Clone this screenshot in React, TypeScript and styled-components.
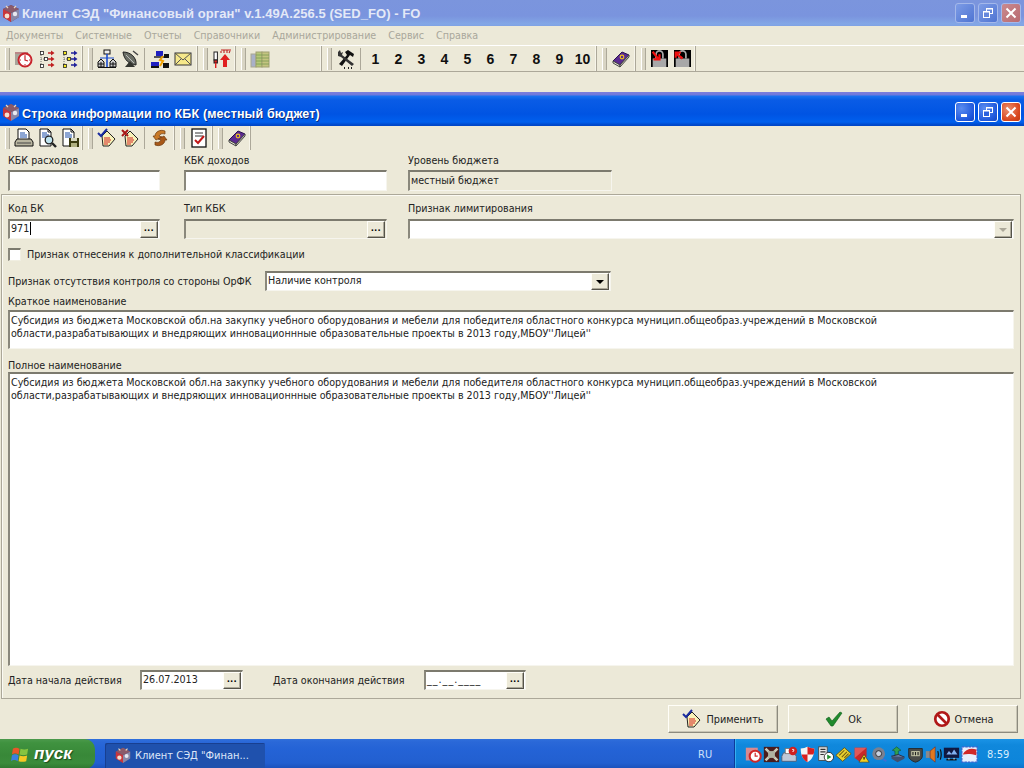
import React from "react";
import styled, { createGlobalStyle } from "styled-components";

const Global = createGlobalStyle`
  html, body { margin: 0; padding: 0; background: #ece9d8; overflow: hidden; }
  * { box-sizing: border-box; }
  body { font-family: "DejaVu Sans", "Liberation Sans", Arial, sans-serif; font-stretch: condensed; font-size: 10.65px; color: #111; }
`;

const Page = styled.div`
  width: 1024px; height: 768px; display: flex; flex-direction: column; background: #ece9d8; overflow: hidden;
`;
const TitleBar = styled.div<{ $active?: boolean }>`
  display: flex; align-items: center; flex: none; color: #fff; white-space: nowrap;
  height: ${p => (p.$active ? 34 : 26)}px;
  padding: ${p => (p.$active ? "6px 3px 0 1px" : "0 3px 0 1px")};
  background: ${p => p.$active
    ? "linear-gradient(#7d7fdc 0,#6f78dc 3px,#1b72ee 4px,#0a5ce6 8px,#0054e3 22px,#0060ee 30px,#0047c8 33px)"
    : "linear-gradient(#7b95dd 0,#7a94de 16px,#83a7e6 24px,#7fa2e4 26px)"};
`;
const TitleIcon = styled.span`display: flex; width: 20px; height: 20px; flex: none;`;
const TitleText = styled.span<{ $active?: boolean }>`
  flex: 1; margin-left: 1px; font-family: "Liberation Sans", Arial, sans-serif; font-weight: 700;
  font-size: ${p => (p.$active ? 12.5 : 13)}px;
  letter-spacing: ${p => (p.$active ? 0.15 : 0.06)}px;
  padding-top: ${p => (p.$active ? 3 : 0)}px;
  color: ${p => (p.$active ? "#fff" : "#e4e9f7")};
  text-shadow: ${p => (p.$active ? "1px 1px 0 #0a2d80" : "none")};
`;
const WinButtons = styled.div`display: flex; gap: 3px;`;
const WinBtn = styled.div<{ $close?: boolean; $active?: boolean }>`
  width: 20px; height: 20px; border-radius: 3px; display: flex; align-items: center; justify-content: center;
  border: 1px solid ${p => (p.$active ? "#fff" : "#a4b8ea")};
  background: ${p => p.$close
    ? (p.$active ? "radial-gradient(circle at 35% 35%,#eb9070,#d9481f 65%,#c23a10)" : "linear-gradient(135deg,#c98a8f,#b96a70)")
    : (p.$active ? "radial-gradient(circle at 30% 30%,#5a8cf0,#1f58dc 70%,#1646c0)" : "linear-gradient(135deg,#7d9ce6,#4f74d2)")};
`;
const MenuBar = styled.div`
  height: 19px; flex: none; display: flex; align-items: center; gap: 12px; padding-left: 6px; color: #a9a79b;
`;
const Toolbar = styled.div<{ $framed?: boolean }>`
  display: flex; flex: none; height: ${p => (p.$framed ? 27 : 25)}px;
  border-top: ${p => (p.$framed ? "1px solid #fff" : "0")};
  border-bottom: 1px solid ${p => (p.$framed ? "#aca899" : "#ece9d8")};
`;
const Band = styled.div<{ $width?: number }>`
  display: flex; align-items: center; padding: 0 1px 0 12px; position: relative; flex: none;
  ${p => (p.$width ? `width:${p.$width}px;` : "")}
  border-right: 1px solid #aca899;
  box-shadow: inset -1px 0 0 #f7f5ea;
  &::before {
    content: ""; position: absolute; left: 5px; top: 2px; bottom: 1px; width: 3px;
    background: #d8d4c4; border-left: 1px solid #fff; border-right: 1px solid #aca899;
  }
`;
const Tool = styled.div`
  width: 23px; height: 23px; display: flex; align-items: center; justify-content: center;
  font-family: "Liberation Sans", Arial, sans-serif; font-size: 14px; font-weight: 700; color: #101010; flex: none;
`;
const ToolSep = styled.div`width: 7px; height: 22px; flex: none; display: flex; justify-content: center; &::after { content: ""; width: 1px; background: #aca899; }`;
const Spacer = styled.div<{ $h: number }>`height: ${p => p.$h}px; flex: none;`;

const Panel = styled.div`
  flex: none; height: 43px; padding: 2px 0 0 8px; display: flex; align-items: flex-start;
`;
const Group = styled.div`
  flex: none; height: 505px; margin: 0 3px 0 1px; padding: 6px 0 0 6px;
  border: 1px solid #aca899; box-shadow: inset 1px 1px 0 #fbfaf3;
  display: flex; flex-direction: column;
`;
const Field = styled.div<{ $w: number; $gap?: number }>`
  width: ${p => p.$w}px; margin-right: ${p => p.$gap ?? 0}px; flex: none; display: flex; flex-direction: column;
`;
const Label = styled.label<{ $gap?: number }>`
  height: 14px; line-height: 14px; padding-top: 1px; margin-bottom: ${p => p.$gap ?? 0}px; white-space: nowrap; display: block;
  color: #222;
`;
const Sunken = styled.div<{ $h?: number; $off?: boolean }>`
  height: ${p => p.$h ?? 20}px; display: flex; align-items: center; justify-content: space-between;
  background: ${p => (p.$off ? "#ece9d8" : "#fff")}; color: #222;
  border-style: solid; border-width: 2px 1px 1px 2px;
  border-color: #7c7a6e #f6f5ee #f6f5ee #8a887c;
  padding-left: 1px; white-space: nowrap;
`;
const Caret = styled.span`display: inline-block; width: 1px; height: 13px; background: #000; margin-left: 1px;`;
const InputText = styled.span<{ $mask?: boolean }>`
  display: flex; align-items: center; padding-bottom: 2px;
  ${p => (p.$mask ? "letter-spacing: 1px;" : "")}
`;
const RaisedBtn = styled.div`
  width: 18px; height: 17px; flex: none; margin-right: 1px; display: flex; align-items: center; justify-content: center;
  background: #ece9d8; border: 1px solid; border-color: #fffef8 #55534a #55534a #fffef8;
  box-shadow: inset -1px -1px 0 #aca899;
  font-family: "Liberation Sans", Arial, sans-serif; font-weight: 700; font-size: 10px; line-height: 8px; color: #000;
`;
const Dots = styled.span`letter-spacing: 0.5px; margin-top: -3px;`;
const Arrow = styled.span<{ $dim?: boolean }>`
  width: 0; height: 0; border-style: solid; border-width: 4px 4px 0 4px;
  border-color: ${p => (p.$dim ? "#aca899" : "#000")} transparent transparent transparent;
`;
const Row = styled.div<{ $mt?: number; $h?: number }>`
  display: flex; align-items: flex-start; flex: none; margin-top: ${p => p.$mt ?? 0}px;
  ${p => (p.$h ? `height:${p.$h}px;align-items:center;` : "")}
`;
const Check = styled.span`
  width: 13px; height: 13px; flex: none; background: #fff; margin-right: 6px;
  border-style: solid; border-width: 2px 1px 1px 2px; border-color: #7c7a6e #f1efe2 #f1efe2 #8a887c;
`;
const InlineLabel = styled.span<{ $w?: number; $ml?: number }>`
  white-space: nowrap; color: #222; flex: none;
  ${p => (p.$w ? `width:${p.$w}px;` : "")}
  ${p => (p.$ml ? `margin-left:${p.$ml}px;` : "")}
`;
const TextBox = styled.div<{ $h: number }>`
  width: 1006px; height: ${p => p.$h}px; background: #fff; color: #222; flex: none;
  border-style: solid; border-width: 2px 1px 1px 2px; border-color: #7c7a6e #f6f5ee #f6f5ee #8a887c;
  padding: 2px 0 0 1px; line-height: 13px;
`;
const TextLine = styled.div`white-space: nowrap;`;
const Footer = styled.div`
  height: 40px; flex: none; display: flex; justify-content: flex-end; gap: 10px; padding: 6px 6px 0 0;
`;
const Push = styled.div`
  width: 110px; height: 28px; display: flex; align-items: center; justify-content: center; gap: 4px; color: #222;
  background: #ece9d8; font-size: 10.8px;
  border: 1px solid; border-color: #fffef8 #8c8a7e #8c8a7e #fffef8;
  box-shadow: inset -1px -1px 0 #c9c6b6;
`;
const Taskbar = styled.div`
  height: 30px; flex: none; display: flex; color: #fff;
  background: linear-gradient(#2f6fdc 0,#2a68d8 3px,#2463d6 10px,#225fd0 24px,#1a4fb8 30px);
`;
const Start = styled.div`
  width: 95px; flex: none; display: flex; align-items: center; gap: 4px; padding-left: 11px; border-radius: 0 10px 10px 0;
  background: linear-gradient(#4c9a4c 0,#3f923f 4px,#388838 16px,#3b8c3b 24px,#2e752e 30px);
  font: italic 700 17px "Liberation Sans", Arial, sans-serif; text-shadow: 1px 1px 1px #1c4a1c;
`;
const TaskBtn = styled.div`
  width: 160px; height: 26px; margin: 4px 0 0 10px; display: flex; align-items: center; gap: 3px; padding: 0 0 2px 9px;
  background: #1f51ad; border-radius: 2px; font-size: 11px; color: #dde6f8; white-space: nowrap;
  box-shadow: inset 1px 1px 0 #183f90;
`;
const Lang = styled.div`flex: 1; display: flex; align-items: center; padding-left: 433px; font-size: 11px; color: #cfe0fa;`;
const Tray = styled.div`
  width: 290px; flex: none; display: flex; align-items: center; padding-left: 9px;
  background: linear-gradient(#1a93e6 0,#1088dc 6px,#0d85da 24px,#0b6fc8 30px);
  border-left: 1px solid #0d3a9a; box-shadow: inset 1px 0 0 #38b0f0;
`;
const TrayIcon = styled.span`width: 18px; height: 18px; display: flex; align-items: center; justify-content: center; flex: none;`;
const Clock = styled.span`margin-left: 9px; font-size: 11px; color: #d7ecfb;`;

const Svg: React.FC<React.PropsWithChildren<{ s?: number }>> = ({ s = 20, children }) => (
  <svg width={s} height={s} viewBox="0 0 20 20">{children}</svg>
);

const AppIcon: React.FC<{ s?: number }> = ({ s = 20 }) => (
  <Svg s={s}>
    <path d="M2 6l8-4 8 4v8l-8 5-8-5z" fill="#5d4a78" />
    <path d="M2 6l8 4v9l-8-5z" fill="#c8363c" />
    <path d="M10 10l8-4v8l-8 5z" fill="#8888a8" />
    <path d="M2 6l8-4 8 4-8 4z" fill="#8a5a6a" />
    <circle cx="6" cy="13" r="2.4" fill="#f4e0d0" />
    <circle cx="14" cy="11" r="2.2" fill="#e8e8f0" />
    <path d="M5 3l2 2M15 3l-2 2" stroke="#e9d7c0" strokeWidth="1.2" />
  </Svg>
);
const Clk = () => (
  <Svg>
    <rect x="1" y="3" width="11" height="13" fill="#a8a59a" />
    <path d="M1 3h13v2H1z" fill="#b88" />
    <circle cx="11" cy="11" r="6.5" fill="#fff" stroke="#c8242c" strokeWidth="2" />
    <path d="M11 7v4l3 1" stroke="#c8242c" strokeWidth="1.2" fill="none" />
    <path d="M6 11h1M15 11h1M11 6v1M11 15v1" stroke="#c8242c" />
  </Svg>
);
const Tree: React.FC<{ c: string; bg: string }> = ({ c, bg }) => (
  <Svg>
    <rect x="3.5" y="2.5" width="3" height="3" fill={bg} stroke="#222" strokeWidth=".8" />
    <rect x="3.5" y="15.5" width="3" height="3" fill={bg} stroke="#222" strokeWidth=".8" />
    <rect x="7.5" y="8.5" width="3" height="3" fill={bg} stroke="#222" strokeWidth=".8" />
    <path d="M4 6v9M4 10h3" stroke="#555" strokeWidth=".8" strokeDasharray="1 1" />
    <path d="M11 4h4M11 10h4M11 16h4" stroke={c} strokeWidth="1.6" />
    <path d="M14 1.5l3.5 2.5-3.5 2.5zM14 7.5l3.5 2.5-3.5 2.5zM14 13.5l3.5 2.5-3.5 2.5z" fill={c} />
  </Svg>
);
const Org = () => (
  <Svg>
    <rect x="7" y="1" width="6" height="4" fill="#eee" stroke="#111" />
    <path d="M10 5v13" stroke="#1a4cd0" strokeWidth="1.6" />
    <path d="M3 9h14" stroke="#1a4cd0" />
    <path d="M1 18v-5l3-3 3 3v5z" fill="#ccc" stroke="#111" />
    <path d="M13 18v-5l3-3 3 3v5z" fill="#ccc" stroke="#111" />
    <path d="M1 15h6M13 15h6M4 13v5M16 13v5" stroke="#111" />
    <path d="M1 18.5h18" stroke="#111" />
  </Svg>
);
const Dish = () => (
  <Svg>
    <path d="M3 3c1 8 6 12 13 13 1-7-5-13-13-13z" fill="#6b6f66" stroke="#222" />
    <path d="M6 6l8 8" stroke="#bbb" />
    <path d="M5 18l5-6 5 6z" fill="#33352f" />
    <path d="M13 2l5 4" stroke="#444" strokeWidth="1.4" />
  </Svg>
);
const Net = () => (
  <Svg>
    <path d="M6 2h7v5H6z" fill="#2020c0" />
    <path d="M4 7h11v2H4z" fill="#555" />
    <rect x="1" y="13" width="8" height="4" fill="#2020c0" />
    <rect x="1" y="17" width="8" height="2" fill="#111" />
    <rect x="14" y="5" width="5" height="4" fill="#111" />
    <rect x="13" y="14" width="6" height="5" fill="#111" />
    <path d="M13 7l-3 4 3 1-3 5" stroke="#f0a000" strokeWidth="2" fill="none" />
  </Svg>
);
const Mail = () => (
  <Svg>
    <rect x="2" y="4" width="16" height="12" fill="#f6e88a" stroke="#333" />
    <path d="M2 4l8 7 8-7M2 16l6-6M18 16l-6-6" stroke="#555" fill="none" />
  </Svg>
);
const Upload = () => (
  <Svg>
    <rect x="2" y="3" width="3.4" height="8" fill="#fff" stroke="#222" />
    <rect x="2" y="11" width="3.4" height="3" fill="#e02020" stroke="#222" />
    <path d="M3.7 14v5" stroke="#e02020" strokeWidth="1.4" />
    <path d="M8 11l5-6 5 6h-3v7h-4v-7z" fill="#e02020" />
    <path d="M9 2v2M12 1v3M15 1v3M18 2l-1 2M9 1h10" stroke="#c02020" strokeWidth="1.1" />
  </Svg>
);
const Books = () => (
  <Svg>
    <rect x="1" y="5" width="5" height="13" fill="#a9b0c8" stroke="#a8a890" />
    <rect x="6" y="3" width="6" height="15" fill="#b6c878" stroke="#a0a070" />
    <rect x="12" y="3" width="7" height="15" fill="#c4c480" stroke="#a0a070" />
    <path d="M6 6h13M6 9h13M6 12h13M6 15h13" stroke="#7a9a50" strokeWidth=".8" />
  </Svg>
);
const Tools = () => (
  <Svg>
    <path d="M9 3l3-2 6 4-1 3-3-2-8 11-3-2 8-9z" fill="#111" />
    <path d="M2 3l2-2 1 3 2-1-1 3 12 9-2 2L5 8 2 7z" fill="#333" />
    <path d="M8 19h1M12 19h1M15 19h1" stroke="#222" strokeWidth="2" />
  </Svg>
);
const Book = () => (
  <Svg>
    <path d="M2 12L11 3l7 3-9 10z" fill="#5b2a90" stroke="#2a1050" />
    <path d="M2 12l7 4v2l-7-4z" fill="#e8e6d8" stroke="#444" />
    <path d="M9 16l9-10v2l-9 10z" fill="#d8d4c0" stroke="#444" />
    <circle cx="11" cy="8" r="1.8" fill="none" stroke="#f0c020" strokeWidth="1.2" />
  </Svg>
);
const Lock: React.FC<{ flip?: boolean }> = ({ flip }) => (
  <Svg s={17}>
    <rect width="20" height="20" fill="#000" />
    <rect x="2" y="10" width="16" height="10" fill="#a8a8a8" />
    <path d="M6 10V5a4 4 0 018 0v5" stroke="#aaa" strokeWidth="2" fill="none" />
    {flip
      ? <path d="M10 10L2 4M2 9V3h6" stroke="#f01010" strokeWidth="2.6" fill="none" />
      : <path d="M2 2l7 9M10 5v6H3" stroke="#f01010" strokeWidth="2.6" fill="none" />}
  </Svg>
);
const DocLines = () => (
  <>
    <path d="M3 1h8l3 3v14H3z" fill="#fff" stroke="#111" />
    <path d="M11 1v3h3" fill="none" stroke="#111" />
    <path d="M5 5h5M5 7h7M5 9h7" stroke="#1a4ca8" />
  </>
);
const Print = () => (
  <Svg>
    <path d="M4 1h8l3 3v8H4z" fill="#fff" stroke="#111" />
    <path d="M6 5h5M6 7h7M6 9h7" stroke="#1a4ca8" />
    <path d="M3 11h14l2 3v4H1v-4z" fill="#b8b5a0" stroke="#111" />
    <path d="M3 15h14" stroke="#444" />
  </Svg>
);
const Preview = () => (
  <Svg>
    <DocLines />
    <circle cx="12" cy="12" r="3.8" fill="#bfe4f0" stroke="#222" strokeWidth="1.3" />
    <path d="M15 15l4 4" stroke="#222" strokeWidth="2.4" />
  </Svg>
);
const SaveDoc = () => (
  <Svg>
    <DocLines />
    <rect x="9" y="10" width="10" height="9" fill="#3a3a10" />
    <rect x="11" y="10" width="6" height="3" fill="#d8d8c0" />
    <rect x="11" y="15" width="6" height="4" fill="#b0b080" />
  </Svg>
);
const ApplyI: React.FC<{ x?: boolean }> = ({ x }) => (
  <Svg>
    <path d="M5 8l5-5 8 8-6 7H6z" fill="#f8f2b8" stroke="#222" />
    <path d="M7 10h6M7 12h7M7 14h6M7 16h4" stroke="#d02020" />
    {x
      ? <path d="M2 2l6 6M8 2L2 8" stroke="#a81818" strokeWidth="2" />
      : <path d="M1 5l3 3 6-7" stroke="#1a2ca0" strokeWidth="2" fill="none" />}
  </Svg>
);
const Sync = () => (
  <Svg>
    <path d="M5 8c0-4 5-7 10-5v3c-3-1-5 0-6 2l3 1-6 3-3-4z" fill="#c87a28" stroke="#6a3a10" strokeWidth=".7" />
    <path d="M15 12c0 4-5 7-10 5v-3c3 1 5 0 6-2l-3-1 6-3 3 4z" fill="#a85818" stroke="#6a3a10" strokeWidth=".7" />
  </Svg>
);
const Report = () => (
  <Svg>
    <rect x="3" y="1" width="14" height="18" fill="#fff" stroke="#111" strokeWidth="1.3" />
    <path d="M6 5h8M6 8h8" stroke="#333" />
    <path d="M6 12l3 3 6-7" stroke="#c01818" strokeWidth="2" fill="none" />
  </Svg>
);
const Tick = () => (
  <Svg>
    <path d="M2 10l3-2 3 4 8-9 2 1-9 13h-2z" fill="#1f8a2c" stroke="#0c5a18" strokeWidth=".6" />
  </Svg>
);
const Stop = () => (
  <Svg s={18}>
    <circle cx="10" cy="10" r="7.5" fill="#fff" stroke="#b01818" strokeWidth="3" />
    <path d="M5 5l10 10" stroke="#b01818" strokeWidth="3" />
  </Svg>
);
const Flag = () => (
  <Svg s={19}>
    <path d="M2 4c3-2 5-1 7 0l-1 6c-2-1-4-2-7 0z" fill="#e8572a" />
    <path d="M10 4c3 1 5 1 8 0l-1 6c-3 1-5 1-8 0z" fill="#86c440" />
    <path d="M1 11c3-2 5-1 7 0l-1 6c-2-1-4-2-7 0z" fill="#3a80e0" />
    <path d="M9 11c3 1 5 1 8 0l-1 6c-3 1-5 1-8 0z" fill="#f6c823" />
  </Svg>
);

const T: React.FC<React.PropsWithChildren> = ({ children }) => <svg width="17" height="17" viewBox="0 0 20 20">{children}</svg>;
const trayIcons = [
  <T key="0"><rect x="1" y="2" width="14" height="15" fill="#d88a90" /><circle cx="12" cy="12" r="6.5" fill="#fff" stroke="#d02828" strokeWidth="2.4" /><path d="M12 8v4h3" stroke="#d02828" strokeWidth="1.4" fill="none" /></T>,
  <T key="1"><rect x="1" y="1" width="18" height="18" fill="#4a1c1c" /><path d="M3 3l14 14M17 3L3 17" stroke="#c8c8b8" strokeWidth="3" /><rect x="6" y="6" width="8" height="8" fill="#b0b0a0" /></T>,
  <T key="2"><path d="M3 8h12l3 4v6H1v-6z" fill="#c0c8d8" stroke="#505a70" /><rect x="5" y="3" width="8" height="6" fill="#fff" stroke="#777" /><circle cx="14" cy="6" r="5" fill="#d02020" /><path d="M13 4h2v2h-1v1" stroke="#fff" fill="none" /></T>,
  <T key="3"><path d="M2 3c3 0 6-1 8-2 2 1 5 2 8 2 0 7-2 13-8 16C4 16 2 10 2 3z" fill="#f4f4f4" /><path d="M10 1c2 1 5 2 8 2 0 3-.3 5-1 7h-7zM10 10v9c-4-2-6-5-7-9z" fill="#d82020" /></T>,
  <T key="4"><rect x="2" y="1" width="10" height="16" fill="#e8e8e8" stroke="#444" /><path d="M4 4h6M4 7h6M4 10h4" stroke="#333" strokeWidth="1.4" /><circle cx="14" cy="13" r="5.5" fill="#fff" stroke="#222" /><path d="M12 10l5 3-5 3z" fill="#209030" /></T>,
  <T key="5"><path d="M1 11L11 2l8 7-10 9z" fill="#e8d030" stroke="#605010" /><path d="M5 11l6-6M8 13l6-6M11 14l5-5" stroke="#705a10" strokeWidth="1.2" /></T>,
  <T key="6"><path d="M2 2h14v10l-7 7-7-5z" fill="#c82828" /><path d="M2 2h14l-14 12z" fill="#e05858" /><path d="M13 10l6 9H7z" fill="#f4d020" stroke="#222" strokeWidth=".6" /><path d="M13 13v3" stroke="#111" strokeWidth="1.4" /></T>,
  <T key="7"><circle cx="9" cy="9" r="7.5" fill="#7a8090" /><circle cx="9" cy="9" r="3.5" fill="#c8d0e0" stroke="#222" /><path d="M14 15l4 3" stroke="#4070d0" strokeWidth="2.4" /></T>,
  <T key="8"><path d="M9 1l5 4-3 1v5H7V6L4 5z" fill="#30a050" stroke="#104020" strokeWidth=".6" /><path d="M3 12l8-2 7 3-8 4z" fill="#7080a8" stroke="#223" /><path d="M3 12v3l7 4 8-4v-2" fill="#405070" /></T>,
  <T key="9"><path d="M2 3h16v9c0 3-4 6-8 7-4-1-8-4-8-7z" fill="#4a4a48" stroke="#222" /><path d="M5 6h10v6H5z" fill="#c8c8a8" /><path d="M7 7v4M10 7v4M13 7v4" stroke="#222" strokeWidth="1.4" /></T>,
  <T key="10"><rect x="1" y="6" width="5" height="8" fill="#8a8a8a" /><path d="M6 6l6-5v18l-6-5z" fill="#e07820" stroke="#622" strokeWidth=".6" /><path d="M15 6c1 3 1 5 0 8M18 4c1.4 4 1.4 8 0 12" stroke="#111" strokeWidth="1.4" fill="none" /></T>,
  <T key="11"><rect x="1" y="2" width="18" height="12" fill="#101840" /><path d="M4 10l3-4 3 3 3-5 4 6z" fill="#80b0f0" /><path d="M4 15h12v2H4z" fill="#111" /><path d="M7 14v2M13 14v2" stroke="#fff" /></T>,
  <T key="12"><rect x="1" y="1" width="18" height="18" fill="#e8eefc" stroke="#3060d0" strokeWidth="1.4" strokeDasharray="3 1" /><path d="M2 10c3-6 9-8 16-6v7c-6-2-11-2-16-1z" fill="#d02828" /></T>,
];

const F: React.FC<{ w: number; off?: boolean; h?: number; children?: React.ReactNode }> = ({ w, off, h, children }) => (
  <Sunken $off={off} $h={h} style={{ width: w }}>{children}</Sunken>
);
const Ell = () => <RaisedBtn><Dots>...</Dots></RaisedBtn>;

const WinCtl: React.FC<{ active?: boolean }> = ({ active }) => (
  <WinButtons>
    <WinBtn $active={active}><svg width="12" height="12"><rect x="2" y="8" width="6" height="3" fill="#fff" /></svg></WinBtn>
    <WinBtn $active={active}><svg width="12" height="12" fill="none" stroke="#fff"><rect x="4.5" y="1.5" width="6" height="5" /><rect x="1.5" y="4.5" width="6" height="6" fill={active ? "#2a60de" : "#6688dc"} /><path d="M4 2h7M1 5h7" /></svg></WinBtn>
    <WinBtn $close $active={active}><svg width="12" height="12" stroke="#fff" strokeWidth="2"><path d="M1.5 1.5l9 9M10.5 1.5l-9 9" /></svg></WinBtn>
  </WinButtons>
);

const line1 = "Субсидия из бюджета Московской обл.на закупку учебного оборудования и мебели для победителя областного конкурса муницип.общеобраз.учреждений в Московской";
const line2 = "области,разрабатывающих и внедряющих инновационнные образовательные проекты в 2013 году,МБОУ''Лицей''";

export default function App() {
  return (
    <Page>
      <Global />
      <TitleBar>
        <TitleIcon><AppIcon /></TitleIcon>
        <TitleText>Клиент СЭД "Финансовый орган" v.1.49A.256.5 (SED_FO) - FO</TitleText>
        <WinCtl />
      </TitleBar>
      <MenuBar>
        {["Документы", "Системные", "Отчеты", "Справочники", "Администрирование", "Сервис", "Справка"].map(m => <span key={m}>{m}</span>)}
      </MenuBar>
      <Toolbar $framed>
        <Band $width={83}><Tool><Clk /></Tool><Tool><Tree c="#c02020" bg="#fff" /></Tool><Tool><Tree c="#20209a" bg="#f4e820" /></Tool></Band>
        <Band $width={115}><Tool><Org /></Tool><Tool><Dish /></Tool><ToolSep /><Tool><Net /></Tool><Tool><Mail /></Tool></Band>
        <Band $width={38}><Tool><Upload /></Tool></Band>
        <Band $width={86}><Tool><Books /></Tool></Band>
        <Band $width={275}><Tool><Tools /></Tool><ToolSep />{["1", "2", "3", "4", "5", "6", "7", "8", "9", "10"].map(n => <Tool key={n}>{n}</Tool>)}</Band>
        <Band $width={39}><Tool><Book /></Tool></Band>
        <Band $width={60}><Tool><Lock /></Tool><Tool><Lock flip /></Tool></Band>
      </Toolbar>
      <Spacer $h={20} />
      <TitleBar $active>
        <TitleIcon><AppIcon /></TitleIcon>
        <TitleText $active>Строка информации по КБК (местный бюджет)</TitleText>
        <WinCtl active />
      </TitleBar>
      <Toolbar>
        <Band $width={83}><Tool><Print /></Tool><Tool><Preview /></Tool><Tool><SaveDoc /></Tool></Band>
        <Band $width={92}><Tool><ApplyI /></Tool><Tool><ApplyI x /></Tool><ToolSep /><Tool><Sync /></Tool></Band>
        <Band $width={38}><Tool><Report /></Tool></Band>
        <Band $width={38}><Tool><Book /></Tool></Band>
      </Toolbar>
      <Panel>
        <Field $w={152} $gap={24}><Label $gap={3}>КБК расходов</Label><F w={152} h={21} /></Field>
        <Field $w={203} $gap={21}><Label $gap={3}>КБК доходов</Label><F w={203} h={21} /></Field>
        <Field $w={204}><Label $gap={3}>Уровень бюджета</Label><F w={204} h={21} off><InputText>местный бюджет</InputText></F></Field>
      </Panel>
      <Group>
        <Row>
          <Field $w={152} $gap={24}><Label $gap={4}>Код БК</Label><F w={152}><InputText>971<Caret /></InputText><Ell /></F></Field>
          <Field $w={203} $gap={21}><Label $gap={4}>Тип КБК</Label><F w={203} off><span /><Ell /></F></Field>
          <Field $w={606}><Label $gap={4}>Признак лимитирования</Label><F w={606}><span /><RaisedBtn><Arrow $dim /></RaisedBtn></F></Field>
        </Row>
        <Row $mt={4} $h={22}><Check /><InlineLabel>Признак отнесения к дополнительной классификации</InlineLabel></Row>
        <Row $mt={6} $h={20}>
          <InlineLabel $w={257}>Признак отсутствия контроля со стороны ОрФК</InlineLabel>
          <F w={346}><InputText>Наличие контроля</InputText><RaisedBtn><Arrow /></RaisedBtn></F>
        </Row>
        <Row $mt={3}><Label>Краткое наименование</Label></Row>
        <Row $mt={2}><TextBox $h={39}><TextLine>{line1}</TextLine><TextLine>{line2}</TextLine></TextBox></Row>
        <Row $mt={9}><Label>Полное наименование</Label></Row>
        <Row><TextBox $h={294}><TextLine>{line1}</TextLine><TextLine>{line2}</TextLine></TextBox></Row>
        <Row $mt={4} $h={20}>
          <InlineLabel $w={132}>Дата начала действия</InlineLabel>
          <F w={103}><InputText>26.07.2013</InputText><Ell /></F>
          <InlineLabel $ml={30} $w={151}>Дата окончания действия</InlineLabel>
          <F w={102}><InputText $mask>__.__.____</InputText><Ell /></F>
        </Row>
      </Group>
      <Footer>
        <Push><ApplyI />Применить</Push>
        <Push><Tick />Ok</Push>
        <Push><Stop />Отмена</Push>
      </Footer>
      <Taskbar>
        <Start><Flag />пуск</Start>
        <TaskBtn><AppIcon s={18} />Клиент СЭД "Финан...</TaskBtn>
        <Lang>RU</Lang>
        <Tray>
          {trayIcons.map((icon, i) => <TrayIcon key={i}>{icon}</TrayIcon>)}
          <Clock>8:59</Clock>
        </Tray>
      </Taskbar>
    </Page>
  );
}
